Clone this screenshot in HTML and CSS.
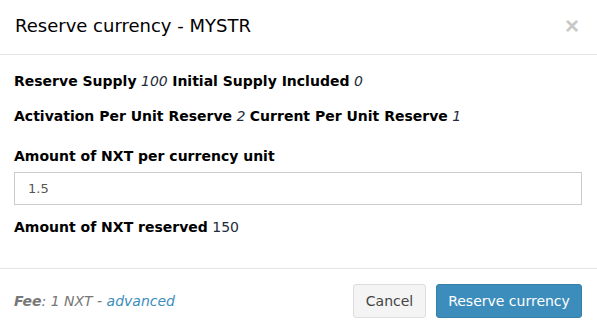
FILE: index.html
```html
<!DOCTYPE html>
<html>
<head>
<meta charset="utf-8">
<link rel="stylesheet" href="styles.css">
</head>
<body>
<div class="modal">
  <div class="modal-header">
    <h4 class="modal-title">Reserve currency - MYSTR</h4>
    <span class="close">&times;</span>
  </div>
  <div class="modal-body">
    <p class="info"><b>Reserve Supply</b> <i class="val">100</i> <b>Initial Supply Included</b> <i class="val">0</i></p>
    <p class="info"><b>Activation Per Unit Reserve</b> <i class="val">2</i> <b>Current Per Unit Reserve</b> <i class="val">1</i></p>
    <div class="form-group">
      <label class="label">Amount of NXT per currency unit</label>
      <input class="input" type="text" value="1.5">
    </div>
    <p class="info last"><b>Amount of NXT reserved</b> <span class="val">150</span></p>
  </div>
  <div class="modal-footer">
    <div class="fee"><b class="fee-label">Fee</b>: 1 NXT - <a class="adv">advanced</a></div>
    <div class="buttons">
      <button class="btn btn-default">Cancel</button>
      <button class="btn btn-primary">Reserve currency</button>
    </div>
  </div>
</div>
</body>
</html>
```

FILE: styles.css
```css
* { box-sizing: border-box; }
html, body { margin: 0; padding: 0; background: #fff; }
body {
  font-family: "DejaVu Sans", Verdana, sans-serif;
  font-size: 14px;
  color: #000;
  width: 597px;
  height: 333px;
  overflow: hidden;
}
.modal { width: 597px; }
.modal-header {
  display: flex;
  justify-content: space-between;
  align-items: center;
  height: 55px;
  padding: 0 15px;
  border-bottom: 1px solid #e5e5e5;
}
.modal-title {
  margin: 0;
  font-size: 18px;
  font-weight: normal;
  line-height: 24px;
  color: #000;
  position: relative;
  top: -1px;
}
.close {
  font-size: 24px;
  font-weight: bold;
  color: #c8c8c8;
  line-height: 20px;
  font-family: "Liberation Sans", Arial, sans-serif;
  position: relative;
  top: -1px;
  right: 3px;
}
.modal-body { padding: 16px 15px 0 14px; }
.info { margin: 0 0 15px; line-height: 20px; }
.info b { font-weight: bold; }
.val { color: #1e2b3a; font-weight: normal; }
.form-group { margin-bottom: 12px; padding-top: 5px; }
.label { display: block; font-weight: bold; line-height: 20px; margin-bottom: 6px; }
.input {
  display: block;
  width: 568px;
  height: 33px;
  border: 1px solid #ccc;
  padding: 0 13px;
  font-family: "DejaVu Sans", Verdana, sans-serif;
  font-size: 13px;
  color: #555;
  border-radius: 0;
  outline: none;
}
.info.last { margin-bottom: 0; }
.modal-footer {
  margin-top: 31px;
  border-top: 1px solid #e5e5e5;
  height: 64px;
  display: flex;
  justify-content: space-between;
  align-items: center;
  padding: 0 15px 0 14px;
}
.fee { font-style: italic; color: #777; position: relative; top: 0px; }
.fee-label { font-weight: bold; }
.adv { color: #3c8dbc; }
.buttons { display: flex; gap: 10px; }
.btn {
  font-family: "DejaVu Sans", Verdana, sans-serif;
  font-size: 14px;
  height: 34px;
  border-radius: 3px;
  padding: 0;
  cursor: pointer;
}
.btn-default {
  background: #f4f4f4;
  border: 1px solid #ddd;
  color: #444;
  width: 73px;
}
.btn-primary {
  background: #3c8dbc;
  border: 1px solid #367fa9;
  color: #fff;
  width: 146px;
}
```
